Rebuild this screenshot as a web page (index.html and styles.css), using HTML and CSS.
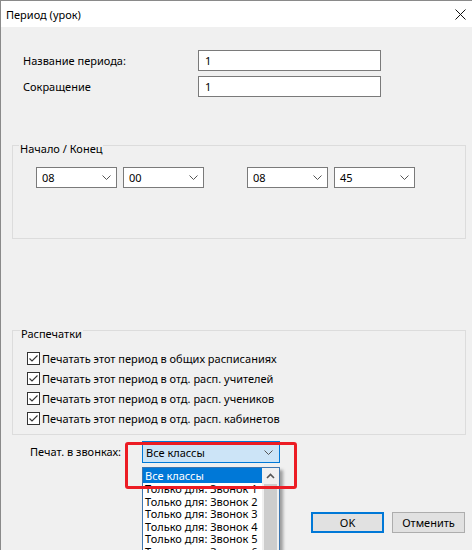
FILE: index.html
```html
<!DOCTYPE html>
<html lang="ru">
<head>
<meta charset="utf-8">
<title>Период (урок)</title>
<link rel="stylesheet" href="styles.css">
</head>
<body>
<div class="window">
  <div class="titlebar">
    <span class="title">Период (урок)</span>
    <svg class="close" width="11" height="11" viewBox="0 0 11 11"><path d="M0.5 0.5 L10.5 10.5 M10.5 0.5 L0.5 10.5" stroke="#111" stroke-width="1" fill="none"/></svg>
  </div>
  <div class="content">
    <div class="form-row">
      <span class="label">Название периода:</span>
      <div class="textbox">1</div>
    </div>
    <div class="form-row">
      <span class="label">Сокращение</span>
      <div class="textbox">1</div>
    </div>

    <div class="group group-time">
      <div class="group-title">Начало / Конец</div>
      <div class="time-row">
        <div class="pair">
          <div class="combo"><span>08</span><svg class="chev" width="9" height="5" viewBox="0 0 9 5"><polyline points="0.5,0.5 4.5,4.5 8.5,0.5" fill="none" stroke="#555" stroke-width="1"/></svg></div>
          <div class="combo"><span>00</span><svg class="chev" width="9" height="5" viewBox="0 0 9 5"><polyline points="0.5,0.5 4.5,4.5 8.5,0.5" fill="none" stroke="#555" stroke-width="1"/></svg></div>
        </div>
        <div class="pair">
          <div class="combo"><span>08</span><svg class="chev" width="9" height="5" viewBox="0 0 9 5"><polyline points="0.5,0.5 4.5,4.5 8.5,0.5" fill="none" stroke="#555" stroke-width="1"/></svg></div>
          <div class="combo"><span>45</span><svg class="chev" width="9" height="5" viewBox="0 0 9 5"><polyline points="0.5,0.5 4.5,4.5 8.5,0.5" fill="none" stroke="#555" stroke-width="1"/></svg></div>
        </div>
      </div>
    </div>

    <div class="group group-print">
      <div class="group-title">Распечатки</div>
      <div class="checks">
        <div class="check"><svg class="box" width="13" height="13" viewBox="0 0 13 13"><rect x="0.5" y="0.5" width="12" height="12" fill="#fff" stroke="#333"/><polyline points="2.5,6.5 5,9 10.5,3.5" fill="none" stroke="#333" stroke-width="1.1"/></svg><span>Печатать этот период в общих расписаниях</span></div>
        <div class="check"><svg class="box" width="13" height="13" viewBox="0 0 13 13"><rect x="0.5" y="0.5" width="12" height="12" fill="#fff" stroke="#333"/><polyline points="2.5,6.5 5,9 10.5,3.5" fill="none" stroke="#333" stroke-width="1.1"/></svg><span>Печатать этот период в отд. расп. учителей</span></div>
        <div class="check"><svg class="box" width="13" height="13" viewBox="0 0 13 13"><rect x="0.5" y="0.5" width="12" height="12" fill="#fff" stroke="#333"/><polyline points="2.5,6.5 5,9 10.5,3.5" fill="none" stroke="#333" stroke-width="1.1"/></svg><span>Печатать этот период в отд. расп. учеников</span></div>
        <div class="check"><svg class="box" width="13" height="13" viewBox="0 0 13 13"><rect x="0.5" y="0.5" width="12" height="12" fill="#fff" stroke="#333"/><polyline points="2.5,6.5 5,9 10.5,3.5" fill="none" stroke="#333" stroke-width="1.1"/></svg><span>Печатать этот период в отд. расп. кабинетов</span></div>
      </div>
    </div>

    <div class="bell-row">
      <span class="label bell-label">Печат. в звонках:</span>
      <div class="combo combo-focus"><span>Все классы</span><svg class="chev" width="9" height="5" viewBox="0 0 9 5"><polyline points="0.5,0.5 4.5,4.5 8.5,0.5" fill="none" stroke="#555" stroke-width="1"/></svg></div>
    </div>

    <div class="buttons">
      <div class="btn btn-default">OK</div>
      <div class="btn">Отменить</div>
    </div>
  </div>

  <div class="dropdown">
    <div class="list">
      <div class="item item-selected">Все классы</div>
      <div class="item">Только для: Звонок 1</div>
      <div class="item">Только для: Звонок 2</div>
      <div class="item">Только для: Звонок 3</div>
      <div class="item">Только для: Звонок 4</div>
      <div class="item">Только для: Звонок 5</div>
      <div class="item">Только для: Звонок 6</div>
    </div>
    <div class="scrollbar">
      <svg class="sb-arrow" width="9" height="6" viewBox="0 0 9 6"><polyline points="1,5 4.5,1.5 8,5" fill="none" stroke="#555" stroke-width="1.6"/></svg>
      <div class="sb-thumb"></div>
    </div>
  </div>

  <div class="annotation"></div>
</div>
</body>
</html>
```

FILE: styles.css
```css
* { box-sizing: border-box; }

html, body {
  margin: 0;
  padding: 0;
  background: #f0f0f0;
}

body {
  font-family: "Noto Sans", "Open Sans", sans-serif;
  font-size: 11px;
  color: #000;
}

.window {
  position: relative;
  width: 472px;
  height: 550px;
  overflow: hidden;
  background: #f0f0f0;
  border-top: 1px solid #8a8a8a;
  border-left: 1px solid #8a8a8a;
}

.titlebar {
  height: 26px;
  background: #fff;
  display: flex;
  align-items: center;
  justify-content: space-between;
  padding: 0 6px 0 5px;
}

.title {
  font-size: 11px;
  line-height: 16px;
  margin-top: 1px;
}

.close {
  display: block;
  margin-top: 1px;
}

.content {
  padding-top: 23px;
}

.form-row {
  display: flex;
  align-items: center;
  padding-left: 22px;
  height: 21px;
  margin-bottom: 5px;
}

.label {
  width: 175px;
  flex: none;
  line-height: 16px;
}

.textbox {
  width: 183px;
  height: 21px;
  background: #fff;
  border: 1px solid #7a7a7a;
  padding-left: 6px;
  line-height: 19px;
}

.group {
  border: 1px solid #dcdcdc;
  margin-left: 11px;
  margin-right: 6px;
}

.group-title {
  width: max-content;
  padding: 0 1px;
  background: #f0f0f0;
  line-height: 16px;
}

.group-time {
  margin-top: 48px;
  padding: 13px 0 50px 23px;
}

.group-time .group-title {
  margin: -18px 0 10px -17px;
}

.time-row {
  display: flex;
  gap: 43px;
}

.pair {
  display: flex;
  gap: 6px;
}

.combo {
  width: 81px;
  height: 21px;
  background: #fff;
  border: 1px solid #7a7a7a;
  display: flex;
  align-items: center;
  justify-content: space-between;
  padding: 0 5px 0 5px;
  line-height: 19px;
}

.chev { display: block; flex: none; }

.group-print {
  margin-top: 91px;
  padding: 13px 0 9px 14px;
}

.group-print .group-title {
  margin: -18px 0 10px -7px;
}

.checks {
  display: flex;
  flex-direction: column;
  gap: 7px;
}

.check {
  display: flex;
  align-items: center;
  height: 13px;
  gap: 2px;
  line-height: 16px;
}

.box { display: block; flex: none; }

.bell-row {
  display: flex;
  align-items: center;
  margin-top: 6px;
  padding-left: 29px;
}

.bell-label {
  width: 112px;
}

.combo-focus {
  width: 138px;
  height: 22px;
  background: #cce4f7;
  border-color: #0078d7;
  padding: 0 6px 0 3px;
}

.buttons {
  display: flex;
  justify-content: flex-end;
  gap: 8px;
  padding-right: 7px;
  margin-top: 49px;
}

.btn {
  width: 73px;
  height: 21px;
  background: #e1e1e1;
  border: 1px solid #adadad;
  text-align: center;
  line-height: 19px;
}

.btn-default {
  border: 2px solid #0078d7;
  line-height: 17px;
}

.dropdown {
  position: absolute;
  left: 141px;
  top: 466px;
  width: 138px;
  height: 100px;
  background: #fff;
  border: 1px solid #3d76b0;
  box-shadow: 3px 3px 3px rgba(0, 0, 0, 0.35);
  display: flex;
}

.list {
  flex: 1;
  font-size: 11px;
}

.item {
  height: 12.6px;
  line-height: 12.6px;
  padding-left: 2px;
  white-space: nowrap;
}

.item-selected {
  height: 15px;
  line-height: 15px;
  background: #0078d7;
  color: #fff;
}

.scrollbar {
  width: 17px;
  flex: none;
  background: #f0f0f0;
  display: flex;
  flex-direction: column;
  align-items: center;
}

.sb-arrow {
  display: block;
  margin-top: 5px;
}

.sb-thumb {
  width: 13px;
  flex: 1;
  margin-top: 5px;
  background: #cdcdcd;
}

.annotation {
  position: absolute;
  left: 124px;
  top: 441px;
  width: 172px;
  height: 47px;
  border: 3px solid #ec1c24;
  border-radius: 3px;
}
```
